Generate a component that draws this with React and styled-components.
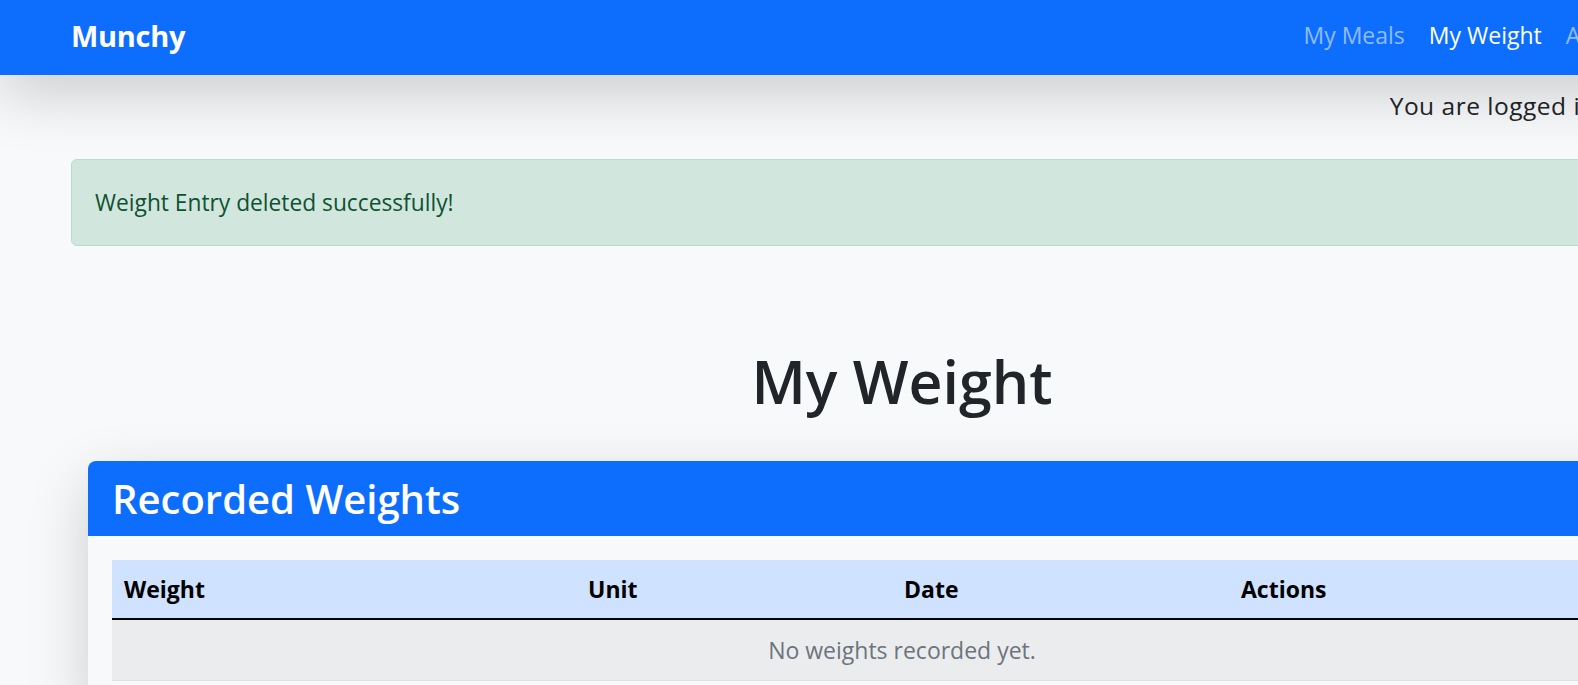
import React from "react";
import styled, { createGlobalStyle } from "styled-components";

const GlobalStyle = createGlobalStyle`
  body {
    margin: 0;
    background: #f8f9fa;
    font-family: "Open Sans", "Noto Sans", sans-serif;
    color: #212529;
    overflow: hidden;
  }
`;

export default function App() {
  const weights = [];

  return (
    <>
      <GlobalStyle />
      <Page>
        <Navbar>
          <NavInner>
            <Brand>Munchy</Brand>
            <NavList>
              <NavLink>My Meals</NavLink>
              <NavLink active>My Weight</NavLink>
              <NavLink>About</NavLink>
              <NavLink>Logout</NavLink>
            </NavList>
          </NavInner>
        </Navbar>

        <Container>
          <LoginInfo>You are logged in as testuser</LoginInfo>

          <Alert>Weight Entry deleted successfully!</Alert>

          <Title>My Weight</Title>

          <Card>
            <CardHeader>Recorded Weights</CardHeader>
            <CardBody>
              <Table>
                <thead>
                  <tr>
                    <Th $width="440px">Weight</Th>
                    <Th $width="292px">Unit</Th>
                    <Th $width="313px">Date</Th>
                    <Th>Actions</Th>
                  </tr>
                </thead>
                <tbody>
                  {weights.length === 0 && (
                    <tr>
                      <EmptyCell colSpan={4}>No weights recorded yet.</EmptyCell>
                    </tr>
                  )}
                </tbody>
              </Table>
            </CardBody>
          </Card>
        </Container>
      </Page>
    </>
  );
}

const Page = styled.div`
  width: 1804px;
  min-height: 685px;
`;

const Navbar = styled.nav`
  position: relative;
  z-index: 1;
  height: 75px;
  background: #0d6efd;
  box-shadow: 0 20px 60px rgba(0, 0, 0, 0.175);
`;

const NavInner = styled.div`
  display: flex;
  align-items: center;
  justify-content: space-between;
  height: 100%;
  box-sizing: border-box;
  padding: 0 75px 5px 71px;
`;

const Brand = styled.a`
  color: #fff;
  font-size: 29px;
  font-weight: 700;
  letter-spacing: -0.3px;
`;

const NavList = styled.div`
  display: flex;
  align-items: center;
`;

const NavLink = styled.a`
  padding: 0 12px;
  font-size: 23px;
  color: ${(p) => (p.active ? "#fff" : "rgba(255, 255, 255, 0.55)")};
  &:last-child {
    padding-right: 0;
  }
`;

const Container = styled.main`
  padding: 0 71px 40px;
`;

const LoginInfo = styled.p`
  margin: 14px 0 0;
  text-align: right;
  font-size: 24.5px;
  letter-spacing: 0.5px;
  line-height: 34px;
`;

const Alert = styled.div`
  margin-top: 36px;
  padding: 25px 23px;
  background: #d1e7dd;
  border: 1px solid #badbcc;
  border-radius: 6px;
  color: #0f5132;
  font-size: 22.75px;
  line-height: 35px;
`;

const Title = styled.h1`
  margin: 99px 0 44px;
  text-align: center;
  font-size: 59px;
  font-weight: 600;
  line-height: 72px;
`;

const Card = styled.section`
  margin: 0 17px;
  background: #f8f9fa;
  border-radius: 8px;
  box-shadow: 0 20px 60px rgba(0, 0, 0, 0.175);
`;

const CardHeader = styled.h2`
  margin: 0;
  height: 75px;
  padding: 0 24px;
  display: flex;
  align-items: center;
  background: #0d6efd;
  border-radius: 8px 8px 0 0;
  color: #fff;
  font-size: 40px;
  font-weight: 600;
`;

const CardBody = styled.div`
  padding: 24px;
`;

const Table = styled.table`
  width: 100%;
  table-layout: fixed;
  border-collapse: collapse;
  font-size: 23px;
`;

const Th = styled.th`
  width: ${(p) => p.$width || "auto"};
  padding: 12px;
  text-align: left;
  background: #cfe2ff;
  color: #000;
  font-weight: 700;
  line-height: 34px;
  border-bottom: 2px solid #000;
`;

const EmptyCell = styled.td`
  padding: 13px 12px;
  text-align: center;
  background: #ebecee;
  color: #6c757d;
  line-height: 34px;
  border-bottom: 1px solid #dee2e6;
`;
